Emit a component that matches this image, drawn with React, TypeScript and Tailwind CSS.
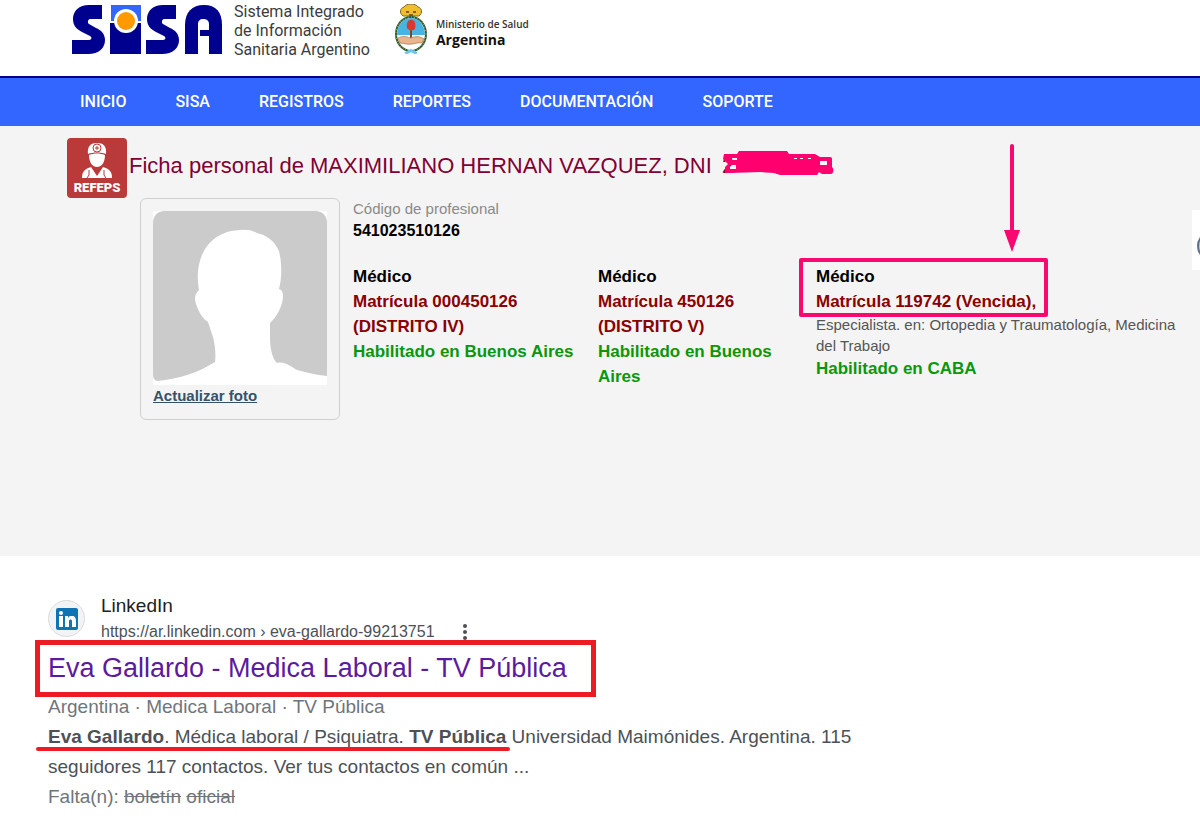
const navItems = ["INICIO", "SISA", "REGISTROS", "REPORTES", "DOCUMENTACIÓN", "SOPORTE"];

function SisaLogo() {
  return (
    <svg className="h-[50px] w-[150px]" viewBox="0 0 150 50" role="img" aria-label="SISA">
      <g fill="#00008f">
        <path d="M30 0H17C7 0 1 6 1 14c0 6 3 10 9 13l8 4c2 1 2 4-1 4H0v14h16c11 0 17-6 17-14 0-6-4-10-9-12l-7-4c-2-1-1-5 1-5h12z" />
        <path d="M38 17h31v32H38z" />
        <path d="M104 0H91C81 0 75 6 75 14c0 6 3 10 9 13l8 4c2 1 2 4-1 4H74v14h16c11 0 17-6 17-14 0-6-4-10-9-12l-7-4c-2-1-1-5 1-5h12z" />
        <path d="M113 49V20c0-13 7-20 19-20s18 7 18 20v29z" />
      </g>
      <path d="M126 50V19c0-3 2-5 5-5s6 1 6 5v6h-9v6h9v19z" fill="#fff" />
      <path d="M39 0h30v16H39z" fill="#3366ff" />
      <path d="M37 17h34" stroke="#fff" strokeWidth="2" />
      <circle cx="54" cy="16" r="12" fill="#fff" />
      <circle cx="54" cy="16" r="9" fill="#ff9900" />
    </svg>
  );
}

function CoatOfArms() {
  return (
    <svg className="h-[50px] w-[34px]" viewBox="0 0 34 50" aria-hidden="true">
      <path d="M9 12C5 9 6 4 10 3c2-4 12-4 14 0 4 1 5 6 1 9z" fill="#f0bd2e" stroke="#7d6a2b" strokeWidth="1" />
      <path d="M12 8h3m4 0h3m-7 3h4" stroke="#6b3f18" strokeWidth="1.5" />
      <ellipse cx="17" cy="30" rx="16" ry="18" fill="#2a5b34" />
      <ellipse cx="17" cy="30" rx="15" ry="17" fill="none" stroke="#d3b24c" strokeWidth="1" strokeDasharray="1 2" />
      <ellipse cx="17" cy="30" rx="14" ry="16" fill="#fff" />
      <path d="M3 31a14 17 0 0 1 28 0z" fill="#48b4e4" />
      <path d="M17 21v18" stroke="#7a4a25" strokeWidth="2" />
      <path d="M13 24c-1-6 2-9 5-8 3 0 4 4 3 9-2 2-6 2-8-1z" fill="#d93a30" />
      <path d="M4 34c4-2 8-2 12 0l4-1c4-1 7 0 10 2l-2 4c-4-1-7 1-10 1-5 1-8-1-12-1z" fill="#e9b58f" stroke="#a8734f" strokeWidth="0.7" />
      <path d="M11 49l6-3 6 3m-10 0 4-2 4 2" fill="none" stroke="#69c8ec" strokeWidth="2" />
    </svg>
  );
}

function RefepsBadge() {
  return (
    <div className="flex h-[60px] w-[60px] shrink-0 flex-col items-center rounded bg-[#b93a38] pt-1">
      <svg className="h-9 w-8" viewBox="0 0 32 36" aria-hidden="true">
        <path d="M7 12C6 4 10 1 16 1s10 3 9 11c-5-2-13-2-18 0z" fill="#fff" />
        <circle cx="16" cy="6" r="4" fill="none" stroke="#b93a38" strokeWidth="1" />
        <path d="M16 4v4m-2-2h4" stroke="#b93a38" strokeWidth="1" />
        <path d="M8 13c5-2 11-2 16 0 0 7-3 12-8 12s-8-5-8-12z" fill="#fff" />
        <path d="M1 36c0-7 3-9 9-11l6 9 6-9c6 2 9 4 9 11z" fill="#fff" />
        <path d="M8 28v5l-2 3m17-8v5l2 3" fill="none" stroke="#b93a38" strokeWidth="1" />
      </svg>
      <span className="text-[13px] leading-5 font-black text-white font-['Roboto',sans-serif]">REFEPS</span>
    </div>
  );
}

function Silhouette() {
  return (
    <svg className="h-[174px] w-[174px]" viewBox="0 0 174 174" role="img" aria-label="Sin foto">
      <path d="M0 0h174v174H0z" fill="#fff" />
      <path d="M12 0h150c8 0 12 5 12 12v153c-11-1-21-4-30-6-7-4-13-9-20-7-5-5-7-15-7-26v-14c7-7 10-13 12-20 2-8 1-13-3-14 3-12 3-25 0-38-5-11-13-16-22-18-9-5-19-3-30-1-11 4-20 11-25 23-5 12-5 24-3 35-4 4-5 8-3 14 3 9 7 15 12 18l5 15c2 8 3 17 2 25-16 10-35 17-58 19-3-1-4-3-4-6V12C0 5 4 0 12 0z" fill="#cbcbcb" />
    </svg>
  );
}

function License({ lines, status }: { lines: string[]; status: string }) {
  return (
    <div>
      <p className="text-black">Médico</p>
      {lines.map((line) => (
        <p key={line} className="text-[#8b0000]">{line}</p>
      ))}
      <p className="text-[#0b970b]">{status}</p>
    </div>
  );
}

export default function App() {
  return (
    <div className="min-h-screen bg-white font-['Liberation_Sans',Arial,sans-serif]">
      <header className="flex h-[78px] items-start border-b-2 border-[#00008b] pl-[72px]">
        <div className="pt-[5px]">
          <SisaLogo />
        </div>
        <p className="ml-3 pt-0.5 text-base leading-[19px] text-[#3c3c3c] font-['Roboto',sans-serif]">
          Sistema Integrado
          <br />
          de Información
          <br />
          Sanitaria Argentino
        </p>
        <div className="ml-6 flex items-start gap-2 pt-1">
          <CoatOfArms />
          <p className="pt-3 text-[10px] leading-4 font-semibold text-[#333] font-['Open_Sans',sans-serif]">
            Ministerio de Salud
            <br />
            <b className="text-sm leading-4 font-bold text-[#111]">Argentina</b>
          </p>
        </div>
      </header>

      <nav className="flex h-12 items-center gap-[49px] bg-[#3366ff] pl-20 text-base font-medium text-white font-['Roboto',sans-serif]">
        {navItems.map((item) => (
          <a key={item} href="#">{item}</a>
        ))}
      </nav>

      <main className="relative h-[430px] bg-[#f4f4f4] pt-3 pl-[67px]">
        <div className="flex">
          <RefepsBadge />
          <h1 className="pt-3 pl-0.5 text-[22px] leading-8 text-[#800033]">
            Ficha personal de MAXIMILIANO HERNAN VAZQUEZ, DNI{" "}
            <span className="relative ml-1">
              2
              <svg className="absolute top-0 left-0 h-7 w-28 -translate-y-1" viewBox="0 0 112 28" aria-hidden="true">
                <path
                  d="M2 5h13l2-3h48l2 3h26l5 3h10c2 0 2 1 2 3v7c2 2 2 6-1 7h-9l-3-2-2 3H58l-6-2-14-1-30 1H3v-6l3-3-5-5zM10 9h5v2h-5zM8 16h6v4H8zM98 12v4h7v-4zM72 9h3v1h-3zM78 9h3v1h-3zM86 9h3v1h-3z"
                  fill="#ff006e"
                  fillRule="evenodd"
                />
              </svg>
            </span>
          </h1>
        </div>

        <div className="ml-[73px] flex gap-[13px]">
          <div className="h-[222px] w-[200px] shrink-0 rounded-md border border-[#cfcfcf] px-3 pt-3">
            <Silhouette />
            <a href="#" className="block text-[15px] leading-[22px] font-bold text-[#34536a] underline">
              Actualizar foto
            </a>
          </div>

          <div className="min-w-0 flex-1">
            <p className="text-[15px] leading-[22px] text-[#8a8a8a]">Código de profesional</p>
            <p className="text-base leading-[22px] font-bold text-black">541023510126</p>
            <div className="mt-[22px] grid grid-cols-[225px_198px_1fr] gap-5 pr-6 text-[17px] leading-[25px] font-bold">
              <License lines={["Matrícula 000450126", "(DISTRITO IV)"]} status="Habilitado en Buenos Aires" />
              <License lines={["Matrícula 450126", "(DISTRITO V)"]} status="Habilitado en Buenos Aires" />
              <div>
                <div className="relative w-fit">
                  <p className="text-black">Médico</p>
                  <p className="text-[#8b0000]">Matrícula 119742 (Vencida),</p>
                  <div className="absolute -top-1.5 -right-3 -bottom-[3px] -left-[17px] rounded-xs border-4 border-[#f8086f]" />
                  <svg className="absolute right-4 bottom-full mb-3 h-[108px] w-4" viewBox="0 0 16 108" aria-hidden="true">
                    <path d="M8 2v88" stroke="#f8086f" strokeWidth="4" strokeLinecap="round" />
                    <path d="M0 86h16L8 108z" fill="#f8086f" />
                  </svg>
                </div>
                <p className="text-[15px] leading-[21px] font-normal text-[#555]">
                  Especialista. en: Ortopedia y Traumatología, Medicina del Trabajo
                </p>
                <p className="text-[#0b970b]">Habilitado en CABA</p>
              </div>
            </div>
          </div>
        </div>

        <div className="absolute top-[84px] right-0 h-[60px] w-2 bg-white">
          <svg className="h-full w-full" viewBox="0 0 8 60" aria-hidden="true">
            <ellipse cx="14" cy="36" rx="8" ry="11" fill="#b9cbe0" stroke="#5b6f8c" strokeWidth="2" />
          </svg>
        </div>
      </main>

      <section className="px-12 pt-[38px] text-[#4d5156]">
        <div className="flex gap-4">
          <div className="mt-1.5 flex h-[37px] w-[37px] items-center justify-center rounded-full border border-[#dadce0] bg-[#f1f3f4]">
            <svg className="h-[22px] w-[22px]" viewBox="0 0 22 22" role="img" aria-label="LinkedIn">
              <rect width="22" height="22" rx="2" fill="#0f74b3" />
              <path d="M3 8h4v11H3zM9 8h3v2c1-2 2-2 4-2 3 0 4 2 4 5v6h-4v-6c0-2-3-2-3 0v6H9z" fill="#fff" />
              <circle cx="5" cy="5" r="2" fill="#fff" />
            </svg>
          </div>
          <div>
            <p className="text-[19px] leading-6 text-[#202124]">LinkedIn</p>
            <div className="mt-0.5 flex items-center gap-7">
              <cite className="text-base leading-6 not-italic">https://ar.linkedin.com › eva-gallardo-99213751</cite>
              <button type="button" aria-label="Más opciones">
                <svg className="h-4 w-1" viewBox="0 0 4 16">
                  <g fill="#4d5156">
                    <circle cx="2" cy="2" r="2" />
                    <circle cx="2" cy="8" r="2" />
                    <circle cx="2" cy="14" r="2" />
                  </g>
                </svg>
              </button>
            </div>
          </div>
        </div>
        <h2 className="relative -mt-1 -mb-[5px] -ml-[13px] w-fit border-5 border-[#ed1c24] bg-white pr-6 pl-2 text-[27px] leading-[47px] text-[#5c1a9e]">
          <a href="#">Eva Gallardo - Medica Laboral - TV Pública</a>
        </h2>
        <div className="max-w-[820px] text-[19px] leading-[30px]">
          <p className="text-[#70757a]">Argentina · Medica Laboral · TV Pública</p>
          <p>
            <span className="relative">
              <b>Eva Gallardo</b>. Médica laboral / Psiquiatra. <b>TV Pública</b>
              <span className="absolute -right-1 -bottom-1 -left-3 h-1 rounded-full bg-[#ed1c24]" />
            </span>{" "}
            Universidad Maimónides. Argentina. 115 seguidores 117 contactos. Ver tus contactos en común ...
          </p>
          <p className="text-[#70757a]">
            Falta(n): <s>boletín</s> <s>oficial</s>
          </p>
        </div>
      </section>
    </div>
  );
}
